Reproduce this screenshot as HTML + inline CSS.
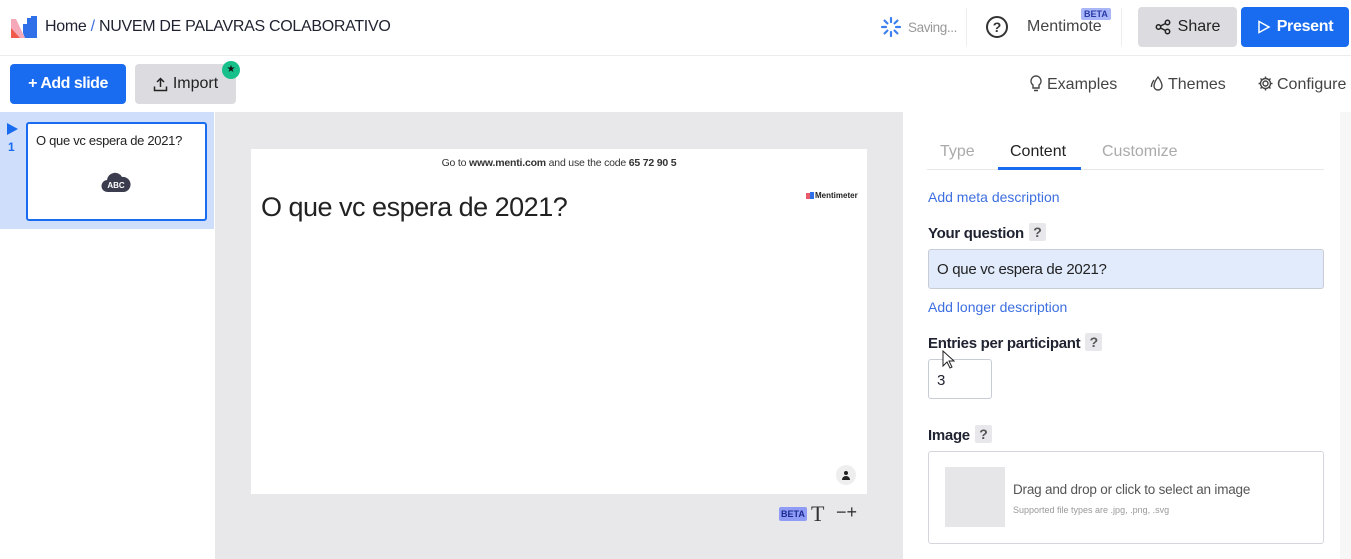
<!DOCTYPE html>
<html><head><meta charset="utf-8"><style>
*{box-sizing:border-box;margin:0;padding:0}
body{width:1351px;height:559px;overflow:hidden;background:#fff;font-family:"Liberation Sans",sans-serif;color:#1f2230;position:relative}
.a{position:absolute}
.btn{position:absolute;border-radius:4px;display:flex;align-items:center;justify-content:center;font-size:16px}
.q{display:inline-block;background:#e8e8ec;color:#555;font-size:14px;width:17px;height:18px;text-align:center;line-height:18px;border-radius:2px;margin-left:5px;vertical-align:1px}
.lbl{font-size:15px;font-weight:bold;color:#1f2230;letter-spacing:-0.3px}
.link{font-size:14px;color:#3d6fe0}
</style></head><body>
<svg class="a" style="left:11px;top:16px" width="26" height="22" viewBox="0 0 26 22"><path d="M0 3 L5 3 L14 22 L0 22Z" fill="#f5a8b7"/><path d="M0 12 L9 22 L0 22Z" fill="#f05a4a"/><path d="M12 8 L16 8 L16 2 L20 2 L20 0 L26 0 L26 22 L14 22 L12 17Z" fill="#2f6fe8"/></svg>
<div class="a" style="left:45px;top:18px;font-size:16px;color:#1f2230;letter-spacing:-0.3px">Home <span style="color:#3d6fe0">/</span> NUVEM DE PALAVRAS COLABORATIVO</div>
<svg class="a" style="left:880px;top:16px" width="22" height="22" viewBox="0 0 22 22" stroke="#3d7ff0" stroke-width="2.2" stroke-linecap="round"><path d="M11 2v4M11 16v4M2 11h4M16 11h4M4.6 4.6l2.8 2.8M14.6 14.6l2.8 2.8M4.6 17.4l2.8-2.8M14.6 7.4l2.8-2.8"/></svg>
<div class="a" style="left:908px;top:20px;font-size:13.5px;color:#999;letter-spacing:-0.4px">Saving...</div>
<div class="a" style="left:966px;top:8px;width:1px;height:38px;background:#eee"></div>
<div class="a" style="left:986px;top:16px;width:22px;height:22px;border:2px solid #333;border-radius:50%;font-size:14px;text-align:center;line-height:18px;font-weight:bold;color:#333">?</div>
<div class="a" style="left:1027px;top:18px;font-size:16px;color:#444">Mentimote</div>
<div class="a" style="left:1081px;top:8px;background:#a9b6f7;color:#2a3aa8;font-size:9px;font-weight:bold;padding:1px 3px;border-radius:2px">BETA</div>
<div class="a" style="left:1121px;top:8px;width:1px;height:38px;background:#eee"></div>
<div class="btn" style="left:1138px;top:7px;width:99px;height:40px;background:#dcdce0;color:#222"><svg width="16" height="16" viewBox="0 0 16 16" fill="none" stroke="#222" stroke-width="1.5" style="margin-right:7px"><circle cx="3.5" cy="8" r="2.2"/><circle cx="12.5" cy="3.5" r="2.2"/><circle cx="12.5" cy="12.5" r="2.2"/><path d="M5.5 7l5-2.5M5.5 9l5 2.5"/></svg>Share</div>
<div class="btn" style="left:1241px;top:7px;width:108px;height:40px;background:#196cf0;color:#fff;font-weight:bold;letter-spacing:-0.3px"><svg width="14" height="14" viewBox="0 0 14 14" fill="none" stroke="#fff" stroke-width="1.5" style="margin-right:6px"><path d="M2 1.5L12 7L2 12.5Z"/></svg>Present</div>
<div class="a" style="left:0;top:55px;width:1351px;height:1px;background:#ececee"></div>
<div class="btn" style="left:10px;top:64px;width:116px;height:40px;background:#196cf0;color:#fff;font-weight:bold;letter-spacing:-0.5px">+ Add slide</div>
<div class="btn" style="left:135px;top:64px;width:101px;height:40px;background:#dcdce0;color:#222"><svg width="15" height="15" viewBox="0 0 15 15" fill="none" stroke="#222" stroke-width="1.5" style="margin-right:5px"><path d="M7.5 10V1.5M4 5l3.5-3.5L11 5M1.5 9.5v4h12v-4"/></svg>Import</div>
<div class="a" style="left:222px;top:61px;width:18px;height:18px;border-radius:50%;background:#17c08a;color:#111;font-size:10px;text-align:center;line-height:18px">★</div>
<svg class="a" style="left:1029px;top:75px" width="14" height="18" viewBox="0 0 14 18" fill="none" stroke="#444" stroke-width="1.4"><path d="M7 1a5 5 0 0 0-3 9v3h6v-3a5 5 0 0 0-3-9zM5 15.5h4"/></svg>
<div class="a" style="left:1047px;top:76px;font-size:16px;color:#444">Examples</div>
<svg class="a" style="left:1149px;top:75px" width="16" height="18" viewBox="0 0 16 18" fill="none" stroke="#444" stroke-width="1.4"><path d="M9 2C6 6 5 9 5 11a4 4 0 0 0 8 0c0-2-1-5-4-9zM5 5C3 8 2 10 2.5 12"/></svg>
<div class="a" style="left:1168px;top:76px;font-size:16px;color:#444">Themes</div>
<svg class="a" style="left:1257px;top:75px" width="17" height="17" viewBox="0 0 17 17" fill="none" stroke="#444" stroke-width="1.4"><circle cx="8.5" cy="8.5" r="2.5"/><path d="M8.5 1.5v2M8.5 13.5v2M1.5 8.5h2M13.5 8.5h2M3.5 3.5l1.5 1.5M12 12l1.5 1.5M3.5 13.5L5 12M12 5l1.5-1.5"/><circle cx="8.5" cy="8.5" r="5"/></svg>
<div class="a" style="left:1277px;top:76px;font-size:16px;color:#444">Configure</div>
<div class="a" style="left:0;top:112px;width:214px;height:117px;background:#cfdefb"></div>
<div class="a" style="left:7px;top:123px;width:0;height:0;border-top:6px solid transparent;border-bottom:6px solid transparent;border-left:11px solid #196cf0"></div>
<div class="a" style="left:8px;top:140px;font-size:12px;color:#196cf0;font-weight:bold">1</div>
<div class="a" style="left:26px;top:122px;width:181px;height:99px;background:#fff;border:2px solid #196cf0;border-radius:3px"></div>
<div class="a" style="left:36px;top:133px;font-size:13px;color:#222;letter-spacing:-0.3px">O que vc espera de 2021?</div>
<svg class="a" style="left:101px;top:168px" width="30" height="25" viewBox="0 0 30 25"><path d="M7 24a6 6 0 0 1-1-12 8 8 0 0 1 15-3 6 6 0 0 1 2 15z" fill="#3b3d4e"/><text x="15" y="20" font-size="8" font-weight="bold" fill="#fff" text-anchor="middle" font-family="Liberation Sans">ABC</text></svg>
<div class="a" style="left:215px;top:112px;width:688px;height:447px;background:#e8e8eb"></div>
<div class="a" style="left:251px;top:149px;width:616px;height:345px;background:#fff"></div>
<div class="a" style="left:251px;top:157px;width:616px;text-align:center;font-size:10.5px;color:#333;letter-spacing:-0.2px">Go to <b>www.menti.com</b> and use the code <b>65 72 90 5</b></div>
<div class="a" style="left:261px;top:192px;font-size:27px;color:#222;letter-spacing:-0.5px">O que vc espera de 2021?</div>
<div class="a" style="left:806px;top:193px;width:4px;height:6px;background:#e85b6b"></div><div class="a" style="left:810px;top:192px;width:4px;height:7px;background:#2f6fe8"></div>
<div class="a" style="left:815px;top:191px;font-size:8px;color:#222;font-weight:bold">Mentimeter</div>
<div class="a" style="left:836px;top:465px;width:20px;height:20px;border-radius:50%;background:#eee"></div>
<svg class="a" style="left:841px;top:470px" width="10" height="10" viewBox="0 0 10 10" fill="#222"><circle cx="5" cy="3" r="2"/><path d="M1 10a4 4 0 0 1 8 0z"/></svg>
<div class="a" style="left:779px;top:507px;background:#8f9cf5;color:#1b2a90;font-size:9px;font-weight:bold;padding:2px 2px;border-radius:2px">BETA</div>
<div class="a" style="left:811px;top:501px;font-size:22px;font-family:'Liberation Serif',serif;color:#333">T</div>
<div class="a" style="left:836px;top:502px;font-size:18px;color:#333">−+</div>
<div class="a" style="left:903px;top:112px;width:448px;height:447px;background:#fff"></div>
<div class="a" style="left:1340px;top:112px;width:11px;height:447px;background:#f7f7f7"></div>
<div class="a" style="left:940px;top:143px;font-size:16px;color:#aaa">Type</div>
<div class="a" style="left:1010px;top:143px;font-size:16px;color:#222">Content</div>
<div class="a" style="left:1102px;top:143px;font-size:16px;color:#aaa">Customize</div>
<div class="a" style="left:927px;top:169px;width:397px;height:1px;background:#e8e8ea"></div>
<div class="a" style="left:998px;top:167px;width:83px;height:3px;background:#196cf0"></div>
<div class="a link" style="left:928px;top:189px">Add meta description</div>
<div class="a lbl" style="left:928px;top:223px">Your question<span class="q">?</span></div>
<div class="a" style="left:928px;top:249px;width:396px;height:40px;background:#e1ebfc;border:1px solid #c8ccd4;border-radius:3px;font-size:15px;padding:11px 8px;color:#222;letter-spacing:-0.3px">O que vc espera de 2021?</div>
<div class="a link" style="left:928px;top:299px">Add longer description</div>
<div class="a lbl" style="left:928px;top:333px">Entries per participant<span class="q">?</span></div>
<div class="a" style="left:928px;top:359px;width:64px;height:40px;border:1px solid #c8ccd4;border-radius:3px;font-size:15px;padding:12px 8px">3</div>
<div class="a lbl" style="left:928px;top:425px">Image<span class="q">?</span></div>
<div class="a" style="left:928px;top:451px;width:396px;height:93px;border:1px solid #d4d6dc;border-radius:3px"></div>
<div class="a" style="left:945px;top:467px;width:60px;height:60px;background:#e6e6e9"></div>
<div class="a" style="left:1013px;top:482px;font-size:13.5px;color:#555;letter-spacing:-0.2px">Drag and drop or click to select an image</div>
<div class="a" style="left:1013px;top:505px;font-size:9px;color:#999">Supported file types are .jpg, .png, .svg</div>
<svg class="a" style="left:942px;top:350px" width="14" height="20" viewBox="0 0 14 20"><path d="M1 1v15l4-4 3 6 2-1-3-6h5z" fill="#fff" stroke="#222" stroke-width="1"/></svg>
</body></html>
